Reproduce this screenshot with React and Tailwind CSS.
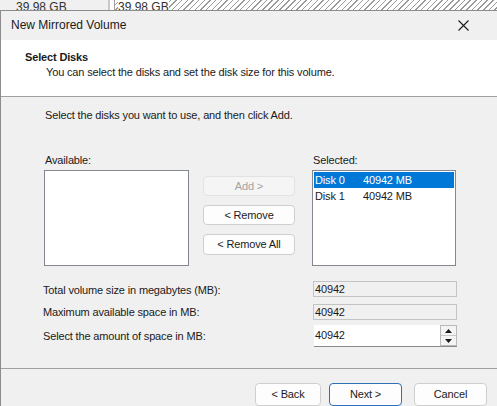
import React from "react";

const font = { fontFamily: '"Liberation Sans", Arial, sans-serif' };

function Btn({ children, className = "", disabled = false, primary = false }) {
  return (
    <div
      className={
        "flex items-center justify-center rounded-[4px] border text-[11px] " +
        (disabled
          ? "border-[#e2e2e2] bg-[#f5f5f5] text-[#a3a3a3] "
          : primary
          ? "border-[#2f6fb3] bg-[#fdfdfd] text-[#1b1b1b] "
          : "border-[#cfcfcf] bg-[#fdfdfd] text-[#1b1b1b] ") +
        className
      }
    >
      {children}
    </div>
  );
}

export default function App() {
  return (
    <div
      className="relative w-[497px] h-[406px] overflow-hidden bg-white text-[#1a1a1a] text-[11px] tracking-[-0.15px]"
      style={font}
    >
      {/* background strip */}
      <div className="flex h-[10px] overflow-hidden tracking-normal">
        <div className="w-[110px] h-full bg-[#f0f0f0] border-r-2 border-[#c8c8c8] pl-[16px] text-[12px] leading-[14px] text-[#333]">
          39.98 GB
        </div>
        <div className="w-[4px] h-full bg-white" />
        <div className="flex-1 h-full border-l border-[#a0a0a0] pl-[3px] text-[12px] leading-[14px] text-[#333] bg-[repeating-linear-gradient(135deg,#ffffff_0px,#ffffff_3px,#9a9a9a_3px,#9a9a9a_4px)]">
          <span className="bg-white">39.98 GB</span>
        </div>
      </div>

      {/* dialog */}
      <div className="border-t border-l border-[#8c8c8c] h-[396px] flex flex-col">
        {/* title bar */}
        <div className="h-[30px] bg-[#f0f0f0] flex items-center justify-between pl-[10px] pr-[28px]">
          <span className="text-[12px] tracking-normal text-[#1a1a1a]">New Mirrored Volume</span>
          <svg width="11" height="11" viewBox="0 0 11 11">
            <path d="M0.5 0.5 L10.5 10.5 M10.5 0.5 L0.5 10.5" stroke="#1a1a1a" strokeWidth="1.1" />
          </svg>
        </div>

        {/* header */}
        <div className="h-[59px] bg-white border-b border-[#a0a0a0] pl-[24px] pt-[10px]">
          <div className="font-bold leading-[14px]">Select Disks</div>
          <div className="leading-[14px] pl-[21px] mt-[1px]">
            You can select the disks and set the disk size for this volume.
          </div>
        </div>

        {/* body */}
        <div className="flex-1 bg-[#f0f0f0] flex flex-col">
          <div className="pl-[44px] pt-[11px] leading-[14px]">
            Select the disks you want to use, and then click Add.
          </div>

          <div className="flex pl-[43px] mt-[31px]">
            {/* available */}
            <div className="w-[145px] flex flex-col">
              <div className="leading-[14px] pl-[1px]">Available:</div>
              <div className="mt-[3px] h-[96px] bg-white border border-[#828790]" />
            </div>
            {/* buttons */}
            <div className="ml-[14px] w-[92px] flex flex-col pt-[23px] gap-[9px]">
              <Btn disabled className="h-[20px]">Add &gt;</Btn>
              <Btn className="h-[20px]">&lt; Remove</Btn>
              <Btn className="h-[21px]">&lt; Remove All</Btn>
            </div>
            {/* selected */}
            <div className="ml-[17px] w-[144px] flex flex-col">
              <div className="leading-[14px] pl-[1px]">Selected:</div>
              <div className="mt-[3px] h-[96px] bg-white border border-[#828790] p-[1px] leading-[16px]">
                <div className="flex bg-[#0078d7] text-white pl-[1px]">
                  <span className="w-[48px]">Disk 0</span>
                  <span>40942 MB</span>
                </div>
                <div className="flex pl-[1px]">
                  <span className="w-[48px]">Disk 1</span>
                  <span>40942 MB</span>
                </div>
              </div>
            </div>
          </div>

          {/* size rows */}
          <div className="pl-[42px] mt-[15px] flex flex-col">
            <div className="flex items-center h-[16px]">
              <span className="w-[270px] mt-[3px]">Total volume size in megabytes (MB):</span>
              <div className="w-[144px] h-[16px] border border-[#c4c4c4] bg-[#f0f0f0] leading-[14px] pl-[1px]">40942</div>
            </div>
            <div className="flex items-center h-[16px] mt-[7px]">
              <span className="w-[270px] mt-[1px]">Maximum available space in MB:</span>
              <div className="w-[144px] h-[16px] border border-[#c4c4c4] bg-[#f0f0f0] leading-[14px] pl-[1px]">40942</div>
            </div>
            <div className="flex items-center h-[22px] mt-[5px]">
              <span className="w-[271px]">Select the amount of space in MB:</span>
              <div className="w-[143px] h-[22px] border-b border-[#8a8a8a] bg-white flex">
                <div className="flex-1 flex items-center pl-[1px]">40942</div>
                <div className="w-[17px] h-full flex flex-col border border-[#b9b9b9] bg-[#f4f4f4]">
                  <div className="flex-1 flex items-center justify-center border-b border-[#c9c9c9]">
                    <svg width="7" height="4" viewBox="0 0 7 4"><path d="M0 4 L3.5 0 L7 4 Z" fill="#1a1a1a" /></svg>
                  </div>
                  <div className="flex-1 flex items-center justify-center">
                    <svg width="7" height="4" viewBox="0 0 7 4"><path d="M0 0 L3.5 4 L7 0 Z" fill="#1a1a1a" /></svg>
                  </div>
                </div>
              </div>
            </div>
          </div>

          {/* footer */}
          <div className="mt-[21px] border-t border-[#a0a0a0] flex-1 flex justify-end pr-[10px] pt-[14px] gap-[8px]">
            <Btn className="w-[66px] h-[23px]">&lt; Back</Btn>
            <Btn primary className="w-[73px] h-[23px]">Next &gt;</Btn>
            <Btn className="w-[73px] h-[23px] ml-[4px]">Cancel</Btn>
          </div>
        </div>
      </div>
    </div>
  );
}
